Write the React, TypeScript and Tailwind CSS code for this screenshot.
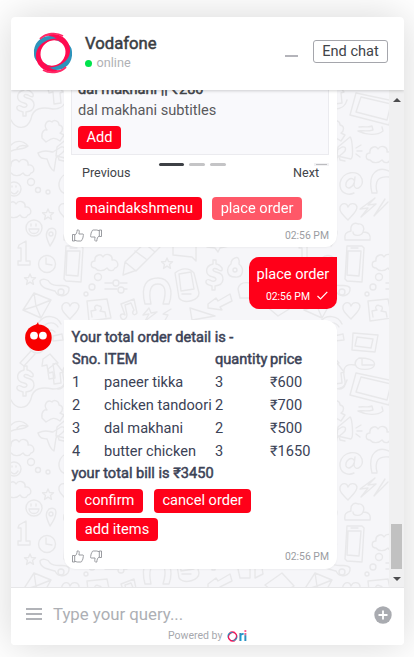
import React from 'react';

const FONT = "font-['Roboto','Noto_Sans',sans-serif]";

const CLOUD = 'M-11 6c-5 0-5-7 0-7c-1-6 6-8 8-4c3-5 10-2 9 3c6-1 8 7 3 8c-2 4-6 3-8 0c-3 3-9 4-12 0z';
const HEART = 'M0 9C-5 4-9 1-8-4c2-5 7-4 8 0c2-5 8-4 9 0c0 5-5 8-9 13z';
const STAR = 'M0-5l1.500 3.500 4 .2-3 2.700 1 4-3.500-2.200-3.500 2.200 1-4-3-2.700 4-.2z';
const DOLLAR = 'M7-7c-3-4-5-4-6-4v-4h-3v4c-8 2-9 11 0 13c5 1 3 5-1 4c-3-1-4-3-6 0c-1 3 3 4 6 5v4h3v-4c10-1 11-12 1-14c-5-1-3-5 1-3c3 2 6 3 5-1z';

function Doodles() {
  return (
    <g id="doodles">
      <path d={DOLLAR} transform="translate(26 102)" />
      <path d={DOLLAR} transform="translate(215 276)" />
      <path d="M11 121c5 10 16 10 20-1c2-12 12-12 22-10c10 0 12-5 13-9" />
      <path d="M48 90l8-6 7 9-3 1 1 10-7 1-1-12-4 1z" />
      <path d="M42 139c-1-7 3-9 5-8c-4-5 0-11 5-8c2-3 7-1 7 3c5 1 4 6 1 8l4 2-4 6c-6-5-9-2-14 1z" />
      <path d="M11 146c5-5 12-5 17 1c-4 4-10 2-17 5M17 149c3-3 6-3 9-2" />
      <path d="M38 154c8-4 11-1 15-1l8-5c4-1 5 3 1 6l-6 5-2 13c-5-3-5-8-7-12c-3-1-7 1-9-6z" />
      <path d={CLOUD} transform="translate(22 168)" />
      <circle cx="31" cy="183" r="3.500" /><circle cx="38" cy="191" r="2.500" /><circle cx="48" cy="193" r="2" />
      <circle cx="14" cy="190" r="7" /><path d="M11 193c3 3 5 2 7-1M12 187v1M16 187v1" />
      <path d={CLOUD} transform="translate(19 210)" />
      <path d={STAR} transform="translate(48 215)" />
      <circle cx="34" cy="229" r="8" /><path d="M29 230c1 6 9 6 10 0zM31 225v2M36 225v2" />
      <path d="M50 247c-3-7-6-12-1-17c8-3 10 4 1 17z" /><circle cx="51" cy="235" r="2" />
      <path d="M73 194c-6 3-15 0-14-10c2-12 19-14 22-4c2 8-7 13-8 6l1-8M73 181c-3-4-9 1-8 6c2 4 7 1 8-3" />
      <path d={HEART} transform="translate(67 212)" />
      <path d="M94 199l-15 11 8-1-7 9 15-13-8 1zM104 200l-11 17 14-14" />
      <path d="M64 241c-1-6 1-8 6-9c-1-7 4-9 7-7c5-1 7 4 5 8c6 0 8 3 7 8zM72 233c0 4 8 5 10 0" />
      <path d="M75 94l38 8-5 24-39-10zM80 98l30 7-4 16-31-8z" />
      <path d="M78 128c6-1 9 1 13-1l1 4c-7 2-11 0-15 1c8 4 19 5 25 0l-1-4" />
      <path d="M57 148l12-10c2 1 4 20 1 22l-14-3zM75 149l5-3M76 152h5M75 155l4 3M58 157l1 4 5 1" />
      <path d={CLOUD} transform="translate(100 155)" />
      <path d="M91 194c-5-20 6-27 17-22M96 193c-3-12 2-16 12-15M91 194h5" />
      <path d="M19 246l7-4v20h4v4h-12v-4h3v-13h-3z" />
      <circle cx="47" cy="265" r="8.500" /><path d="M46 259v6l6 1" />
      <path d="M66 247h15l2 2-2 34-15-1-2-2zM67 252h13l-2 25-12-1zM70 249h7" />
      <path d={STAR} transform="translate(30 280)" />
      <path d="M40 282c2-3 8-2 10 2c7 6 15-1 19 5c1 8-10 11-14 3c-7-2-15-3-15-10z" /><circle cx="61" cy="293" r="3" />
      <path d="M34 294l17 7-10 18-18-8zM34 294l2 13 15-6M23 311l13-4 5 12" />
      <path d={HEART} transform="translate(70 311)" />
      <path d="M87 302l20-2 4 19-22 3zM92 318l-1-6 5-1c-3-3 0-6 3-4c3 0 3 3 1 5l5 1 1 5" />
      <path d="M121 319c-2-4 2-5 4-3l-4-11 13-5 3 14c-3 4-6 0-3-3l-3-7-6 2 2 10c0 4-4 6-6 3z" />
      <path d="M145 305c-5-19 2-26 13-26s16 12 11 26h-6c4-13 2-20-5-20s-10 6-7 20z" />
      <path d="M149 309l-6 7 6-1-4 7 12-9-6 1zM171 310l-8 5 5 1-4 7" />
      <path d="M175 274c6-5 14-6 19 0l5 20c0 7-14 12-20 5zM179 275l12-2 3 17-13 2zM182 295h9" />
      <path d="M235 259c3-2 5 2 4 6c6 5 4 14-4 13c-9 0-9-9-4-13c0-3 1-5 4-6z" /><circle cx="235" cy="271" r="2" />
      <path d="M123 276l2-13 25-24 14 5-27 27zM125 263l11 9M135 252l11 8M144 244l11 9" />
      <path d={CLOUD} transform="translate(106 263)" />
      <path d={STAR} transform="translate(167 264)" />
      <path d="M173 239v17l19 2 4 4V240M207 248l8 1 3 4 2-4 9-2" />
      <path d="M105 284h8M120 284h7M105 290h12M124 290h3" /><circle cx="116" cy="284" r="3" /><circle cx="121" cy="291" r="3" />
      <circle cx="98" cy="278" r="3.500" /><circle cx="92" cy="288" r="3" /><circle cx="86" cy="295" r="2" />
      <path d="M208 305l8-6 2 3 12-7 2 7-12 6 2 3-14-2z" />
      <path d="M190 309l25 8-23 4zM238 290c1-6 6-7 12-6v15h-10z" />
      <path d="M255 282l6 1 2 12-8 4zM265 306l17-12 12 13-16 10z" />
      <path d="M39 323c6-8 18-7 22 2M43 328c5-6 12-5 15 0M47 333c3-3 6-2 8 0M53 337l9-2 1 6-10 1z" />
      <circle cx="37" cy="346" r="8" /><path d="M31 352l-11 12 4 3 11-12" />
      <path d="M43 360l7-5 8 9-5 1 2 14-6 1-2-14-5 1z" />
      <path d="M72 334l25 2-3 17-23-2zM76 338l16 2-2 9-16-2z" />
      <path d="M78 359c6 0 18 1 15 8c-3 5-16 4-18 0c-2-3 0-6 3-8zM81 360v6h11M74 366c-15-3-11 11-10 16c1 7-4 8-6 8" />
    </g>
  );
}

function Backdrop() {
  return (
    <svg className="absolute left-0 top-0" width="378" height="497" viewBox="11 91 378 497" fill="none" stroke="#e8e8ea" strokeWidth="1.400" strokeLinejoin="round" strokeLinecap="round">
      <Doodles />
      <use href="#doodles" x="281" />
      <use href="#doodles" y="280" />
      <use href="#doodles" x="281" y="280" />
    </svg>
  );
}

function Ring({ className }: { className: string }) {
  return (
    <svg viewBox="0 0 42 42" className={className} fill="none">
      <path d="M2 22C1 11 9 3 20 4c6 0 10 2 13 6L9 32C5 30 2 27 2 22z" fill="#2d93bb" />
      <path d="M40 20c1 11-7 19-18 18c-6 0-10-2-13-6L33 10c4 2 7 5 7 10z" fill="#2d93bb" />
      <path d="M31 8C22 4 9 9 5 18c-4 10 3 21 15 22c4 1 8 0 11-2c-7 1-15-1-18-8c-5-9 1-21 18-22z" fill="#ff0a50" />
      <path d="M11 34c9 4 22-1 26-10c4-10-3-21-15-22c-4-1-8 0-11 2c7-1 15 1 18 8c5 9-1 21-18 22z" fill="#ff0a50" />
      <ellipse cx="21" cy="21" rx="13.200" ry="12" transform="rotate(-50 21 21)" fill="white" />
      <path d="M8 7C14 1 24 0 31 4M34 35c-6 6-16 7-23 3" stroke="#ff2a68" strokeWidth="1.800" />
    </svg>
  );
}

function Thumbs() {
  return (
    <div className="flex gap-[6px] pl-px text-[#8e9196]">
      {[false, true].map((down) => (
        <svg key={String(down)} width="12" height="13" viewBox="0 0 12 13" fill="none" stroke="currentColor" strokeWidth="0.900" strokeLinejoin="round" className={down ? 'rotate-180' : ''}>
          <path d="M.5 5.500h2.200v6.500H.5zM2.700 6.200C4.500 5 5 3.500 5.200 1c1.800-.8 2.500.8 1.700 4h4.200c.7.700.3 1.500 0 2c.3.700 0 1.500-.4 2c.1.700-.2 1.300-.6 1.600c-.1.800-.6 1.300-1.300 1.400H5.200l-2.500-.7" />
        </svg>
      ))}
    </div>
  );
}

function MessageFooter() {
  return (
    <div className="flex items-center justify-between pr-px">
      <Thumbs />
      <span className="pt-px text-[10.400px] leading-[14px] text-[#9b9da2]">02:56 PM</span>
    </div>
  );
}

function Chip({ label, className = '' }: { label: string; className?: string }) {
  return (
    <button className={`rounded-[4px] bg-[#ff0019] text-[14.600px] leading-[22px] text-white ${className}`}>{label}</button>
  );
}

const rows = [
  ['1', 'paneer tikka', '3', '₹600'],
  ['2', 'chicken tandoori', '2', '₹700'],
  ['3', 'dal makhani', '2', '₹500'],
  ['4', 'butter chicken', '3', '₹1650'],
];

const STRONG = '[-webkit-text-stroke:0.5px_currentColor]';

export default function App() {
  return (
    <div className={`h-[657px] w-[414px] overflow-hidden bg-white px-[11px] pt-[17px] ${FONT}`}>
      <div className="flex h-[628px] w-[393px] flex-col overflow-hidden rounded-[4px] bg-white shadow-[0_0_40px_rgba(0,0,0,0.16)]">
        <header className="relative z-10 flex h-[73px] shrink-0 items-start bg-white shadow-[0_1px_3px_rgba(0,0,0,0.18)]">
          <Ring className="ml-[21px] mt-[15px] h-[42px] w-[42px]" />
          <div className="ml-[11px] mt-[16px]">
            <div className={`text-[16.700px] leading-[22px] text-[#3a3d42] ${STRONG}`}>Vodafone</div>
            <div className="flex items-center text-[12.700px] leading-[16px] text-[#b0b1b5]">
              <span className="mr-[5px] h-[7px] w-[6.500px] rounded-full bg-[#00e34c]" />
              online
            </div>
          </div>
          <div className="ml-auto mr-[15px] mt-[38px] h-[2px] w-[13px] bg-[#b4b4ba]" />
          <button className="mr-[16px] mt-[23px] h-[23px] w-[75px] rounded-[3px] border border-[#a5a6ac] pb-px text-[14.600px] leading-[20px] text-[#414449]">End chat</button>
        </header>

        <main className="relative flex h-[498px] shrink-0 overflow-hidden border-b border-[#e6e6e8] bg-[#f6f6f9]">
          <Backdrop />
          <div className="relative flex h-full w-[378px] flex-col">
            <section className="ml-[53px] flex h-[157px] w-[273px] shrink-0 flex-col rounded-b-[12px] bg-white px-[7px] shadow-[0_1px_2px_rgba(0,0,0,0.04)]">
              <div className="h-[65px] w-[258px] shrink-0 overflow-hidden border border-t-0 border-[#ebebef] bg-[#f9f9fc] pl-[6px]">
                <div className={`-mt-[11px] text-[14.600px] leading-[20px] text-[#414449] ${STRONG}`}>dal makhani || ₹280</div>
                <div className="mt-px text-[14.600px] leading-[20px] text-[#5a5a5c]">dal makhani subtitles</div>
                <Chip label="Add" className="mt-[6px] h-[23px] w-[43px] pb-px" />
              </div>
              <div className="mt-[8px] flex h-[3px] shrink-0 items-start">
                <span className="ml-[88px] h-[3px] w-[25px] rounded-sm bg-[#3d4045]" />
                <span className="ml-[5px] h-[3px] w-[16px] rounded-sm bg-[#c4c4c6]" />
                <span className="ml-[5px] h-[3px] w-[16px] rounded-sm bg-[#c4c4c6]" />
                <span className="ml-auto mr-[1px] flex h-[3px] w-[15px] items-center bg-[#f1f1f3] px-[2px]">
                  <span className="h-px w-full bg-[#bcbcbf]" />
                </span>
              </div>
              <div className="flex h-[16px] shrink-0 justify-between pl-[11px] pr-[11px] text-[12.600px] leading-[14px] text-[#414449]">
                <span>Previous</span>
                <span>Next</span>
              </div>
              <div className="mt-[15px] flex gap-[10px] pl-[5px]">
                <Chip label="maindakshmenu" className="h-[23px] w-[126px] pb-px" />
                <Chip label="place order" className="h-[23px] w-[90px] pb-px opacity-65" />
              </div>
              <div className="mt-[8px]"><MessageFooter /></div>
            </section>

            <section className="ml-[238px] mt-[10px] h-[52px] w-[88px] shrink-0 rounded-[10px] rounded-tr-none bg-[#ff0019] px-[7px] pt-[7px] text-white">
              <div className="whitespace-nowrap pl-[0.500px] text-[14.600px] leading-[20px]">place order</div>
              <div className="mt-[5px] flex items-center justify-end pt-px text-[10.400px] leading-[14px]">
                02:56 PM
                <svg width="11" height="9" viewBox="0 0 11 9" fill="none" stroke="white" strokeWidth="1.200" className="-mt-[3px] ml-[7px] mr-[2px]">
                  <path d="M.5 5l3 3L10.300.8" />
                </svg>
              </div>
            </section>

            <div className="mt-[11px] flex shrink-0 items-start">
              <svg width="27" height="30" viewBox="0 0 27 30" className="ml-[14px] mt-[2px]">
                <path fill="#f80000" d="M9 3.500C11 3 12.500 1.500 13 0l1 3.500z" />
                <circle cx="13.400" cy="15.700" r="13.300" fill="#f80000" />
                <circle cx="9" cy="13.600" r="3.900" fill="white" />
                <circle cx="17.900" cy="13.600" r="3.900" fill="white" />
              </svg>
              <section className="ml-[12px] h-[249px] w-[273px] rounded-[12px] rounded-tl-none bg-white px-[7px] pt-[7px] text-[14.600px] text-[#3b4256] shadow-[0_1px_2px_rgba(0,0,0,0.04)]">
                <div className={`pl-[0.500px] leading-[20px] ${STRONG}`}>Your total order detail is -</div>
                <table className="mt-px w-[258px] table-fixed border-collapse whitespace-nowrap text-left">
                  <thead>
                    <tr className={`h-[23px] ${STRONG}`}>
                      <th className="w-[33px] p-0 pl-px font-normal">Sno.</th>
                      <th className="w-[111px] p-0 font-normal">ITEM</th>
                      <th className="w-[55px] p-0 font-normal">quantity</th>
                      <th className="p-0 font-normal">price</th>
                    </tr>
                  </thead>
                  <tbody>
                    {rows.map((r) => (
                      <tr key={r[0]} className="h-[23px]">
                        {r.map((c, i) => (
                          <td key={i} className={i === 0 ? 'p-0 pl-px' : 'p-0'}>{c}</td>
                        ))}
                      </tr>
                    ))}
                  </tbody>
                </table>
                <div className={`pl-[0.500px] leading-[20px] ${STRONG}`}>your total bill is ₹3450</div>
                <div className="mt-[6px] flex flex-wrap gap-x-[11px] gap-y-[5px] pl-[5px]">
                  <Chip label="confirm" className="h-[24px] w-[67px] pb-[2px]" />
                  <Chip label="cancel order" className="h-[24px] w-[97px] pb-[2px]" />
                  <Chip label="add items" className="h-[23px] w-[82px] pb-px" />
                </div>
                <div className="mt-[8px]"><MessageFooter /></div>
              </section>
            </div>
          </div>
          <div className="relative flex w-[15px] flex-col items-center bg-[#f0f0f1]">
            <span className="mt-[8px] border-x-4 border-b-4 border-x-transparent border-b-[#4c4c4e]" />
            <span className="mt-[422px] h-[45px] w-[11px] bg-[#c1c1c1]" />
            <span className="mt-[8px] border-x-4 border-t-4 border-x-transparent border-t-[#4c4c4e]" />
          </div>
        </main>

        <footer className="relative flex-1 bg-white">
          <div className="flex h-[40px] items-end pl-[15px] pr-[12px]">
            <div className="mb-[8px] flex w-[16px] flex-col gap-[3px]">
              <span className="h-[2px] bg-[#b1b3b8]" />
              <span className="h-[2px] bg-[#b1b3b8]" />
              <span className="h-[2px] bg-[#b1b3b8]" />
            </div>
            <span className="mb-[4px] ml-[11px] text-[16.800px] leading-[20px] text-[#adafb4]">Type your query...</span>
            <svg width="18" height="18" viewBox="0 0 18 18" className="mb-[4px] ml-auto">
              <circle cx="9" cy="9" r="8.700" fill="#a9abb0" />
              <path d="M9 4.500v9M4.500 9h9" stroke="white" strokeWidth="1.800" />
            </svg>
          </div>
          <div className="flex items-center pl-[157px] pt-px text-[10.500px] leading-[14px] text-[#a6a8ad]">
            Powered by
            <Ring className="ml-[5px] h-[11px] w-[11px]" />
            <span className="text-[14px] font-bold leading-[12px] text-[#2d8fc0]">r</span>
            <span className="bg-linear-to-b from-[#ff5a8a] from-30% to-[#2d8fc0] to-50% bg-clip-text text-[14px] font-bold leading-[12px] text-transparent">i</span>
          </div>
        </footer>
      </div>
    </div>
  );
}
